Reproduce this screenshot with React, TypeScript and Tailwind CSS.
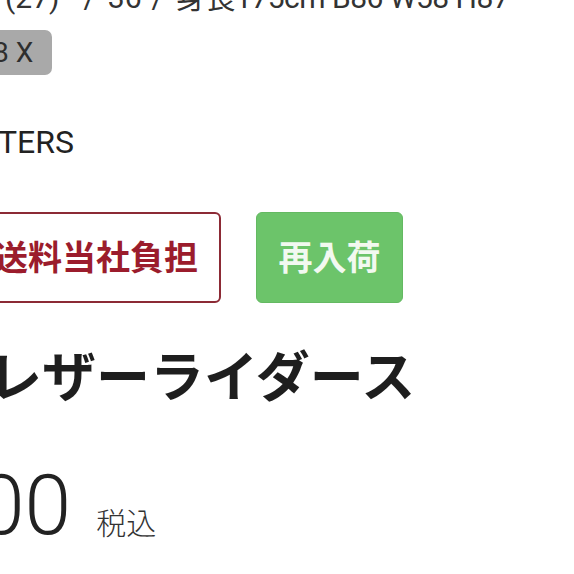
export default function App() {
  return (
    <div className="w-[574px] h-[574px] overflow-hidden bg-white font-['Roboto','Noto_Sans_CJK_JP',sans-serif]">
      <div className="flex flex-col">
        {/* spec line, cut at the top */}
        <div className="-mt-[16px] h-[28px] flex whitespace-nowrap pl-[5px] text-[30px] leading-[28px] text-[#333]">
          <span>(27)</span>
          <span className="ml-[24px]">/</span>
          <span className="ml-[12px]">36</span>
          <span className="ml-[10px]">/</span>
          <span className="ml-[12px] tracking-[-0.5px]">身長175cm B86 W58 H87</span>
        </div>

        {/* size tag */}
        <div className="mt-[18px] -ml-[20px] flex h-[45px] w-fit items-center rounded-[7px] bg-[#a9a9a9] pl-[13px] pr-[19px] text-[28px] leading-none text-[#2e2e2e]">
          8 X
        </div>

        {/* brand */}
        <div className="mt-[51px] -ml-[2px] text-[32px] leading-[32px] text-[#222]">
          TERS
        </div>

        {/* badges */}
        <div className="mt-[54px] flex gap-[35px]">
          <div className="-ml-[30px] flex h-[91px] items-center rounded-[6px] border-2 border-[#8c2a35] pl-[22px] pr-[21px] text-[34px] font-bold leading-none text-[#9b1c2c]">
            送料当社負担
          </div>
          <div className="flex h-[91px] w-[147px] items-center justify-center rounded-[6px] border border-[#64b962] bg-[#6cc46a] text-[34px] font-bold leading-none text-[#f2f9f0]">
            再入荷
          </div>
        </div>

        {/* product name */}
        <div className="mt-[49px] -ml-[12px] whitespace-nowrap text-[54px] font-bold leading-[54px] text-[#1e1e1e]">
          レザーライダース
        </div>

        {/* price */}
        <div className="mt-[58px] flex items-baseline">
          <span className="-ml-[22px] text-[84px] font-light leading-[84px] text-[#222]">00</span>
          <span className="ml-[25px] text-[30px] font-light leading-[30px] text-[#333]">税込</span>
        </div>
      </div>
    </div>
  );
}
